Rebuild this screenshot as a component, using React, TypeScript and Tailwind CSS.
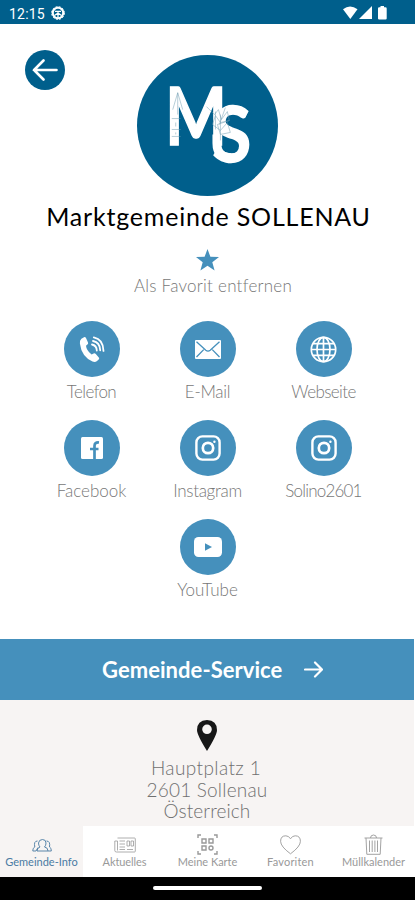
import type { ReactNode } from "react";
import { clsx } from "clsx";

interface Contact {
  label: string;
  tracking: string;
  icon: ReactNode;
}

interface NavEntry {
  label: string;
  tracking: string;
  icon: ReactNode;
}

function InstagramIcon() {
  return (
    <svg width="26" height="26" viewBox="0 0 26 26" fill="none" stroke="white">
      <rect x="1.4" y="1.4" width="23.2" height="23.2" rx="6" strokeWidth="2.4" />
      <circle cx="13" cy="13" r="5.2" strokeWidth="2.7" />
      <circle cx="19.4" cy="6.8" r="1.2" fill="white" stroke="none" />
    </svg>
  );
}

const CONTACTS: Contact[] = [
  {
    label: "Telefon",
    tracking: "tracking-[-0.6px]",
    icon: (
      <svg width="26" height="27" viewBox="0 0 26 27" fill="none">
        <path d="M2.4 2.7 5 1.2q1.3-.5 2 .8l2 4.4q.5 1.3-.6 2.1L7 9.7q.4 4.7 5.6 8.8l2-1q1.3-.5 2.2.5l3 3.4q.9 1.1-.1 2.2l-2 1.7q-1.8 1.2-4.2.2Q2.5 20.6.9 7.5.5 4.3 2.4 2.7Z" fill="white" />
        <path d="M13 8.5q4.600 1 4.800 6M14 5q7 1.200 7.200 9.300M14.800 1.400q9.500 2 9.700 13.500" stroke="white" strokeWidth="1.8" strokeLinecap="round" />
      </svg>
    ),
  },
  {
    label: "E-Mail",
    tracking: "tracking-[-0.3px]",
    icon: (
      <svg width="26" height="19" viewBox="0 0 26 19" fill="none">
        <rect width="26" height="19" rx="1" fill="white" />
        <path d="m1.5 1.8 9.3 8.400q2.200 1.800 4.400 0l9.300-8.400M1.500 17l7.200-7.400M24.500 17l-7.200-7.400" stroke="#4590bc" strokeWidth="1.3" />
      </svg>
    ),
  },
  {
    label: "Webseite",
    tracking: "tracking-[-0.6px]",
    icon: (
      <svg width="27" height="27" viewBox="0 0 27 27" fill="none" stroke="white" strokeWidth="1.7">
        <circle cx="13.5" cy="13.5" r="12.2" />
        <ellipse cx="13.5" cy="13.5" rx="6.5" ry="12.2" />
        <path d="M13.5 1.300v24.400M1.300 13.500h24.400M3 7.600h21M3 19.400h21" />
      </svg>
    ),
  },
  {
    label: "Facebook",
    tracking: "tracking-[0px]",
    icon: (
      <svg width="22" height="22" viewBox="0 0 22 22" fill="none">
        <rect width="22" height="22" rx="1.5" fill="white" />
        <path d="M13.500 22V9q0-4 4.500-3.500M9 12h8.500" stroke="#4590bc" strokeWidth="2.700" />
      </svg>
    ),
  },
  { label: "Instagram", tracking: "tracking-[-0.3px]", icon: <InstagramIcon /> },
  { label: "Solino2601", tracking: "tracking-[-0.8px]", icon: <InstagramIcon /> },
  {
    label: "YouTube",
    tracking: "tracking-[0px]",
    icon: (
      <svg width="28" height="20" viewBox="0 0 28 20">
        <rect width="28" height="20" rx="4.5" fill="white" />
        <path d="m11 6.300 7 3.700-7 3.700Z" fill="#4590bc" />
      </svg>
    ),
  },
];

const NAV: NavEntry[] = [
  {
    label: "Gemeinde-Info",
    tracking: "tracking-[0px]",
    icon: (
      <svg width="20" height="14" viewBox="0 0 20 14" fill="none" stroke="currentColor" strokeWidth="0.9">
        <path d="M5 13q0-3 3-4-1.500-1.500-1.500-4Q7 1.500 10.500 1.500T14 5q0 2.500-1.500 4 3.500.5 3.500 4ZM6 9.500 4 13H.8q-.3-3 2-4Q1.500 3 5.500 3M14.500 3q4 0 3 6 2 .8 1.800 4H16" />
      </svg>
    ),
  },
  {
    label: "Aktuelles",
    tracking: "tracking-[-0.1px]",
    icon: (
      <svg width="22" height="16" viewBox="0 0 22 16" fill="none" stroke="currentColor" strokeWidth="0.8">
        <path d="M3.500 1h17q.8 0 .8.800v12.400q0 .8-.8.800H2.500q-1.700 0-1.700-1.500V4h2.700v9.500M5.500 4H11M5.500 7H11M5.500 10H11M5.500 12.500H11M13 12.500h6M13 4h2.500v5H13ZM17 4h2.500v5H17Z" />
      </svg>
    ),
  },
  {
    label: "Meine Karte",
    tracking: "tracking-[0px]",
    icon: (
      <svg width="21" height="21" viewBox="0 0 21 21" fill="none" stroke="currentColor" strokeWidth="1.4">
        <path d="M1 4V1h3M17 1h3v3M20 17v3h-3M4 20H1v-3M5 5h4v4H5ZM12 5h4v4h-4ZM5 12h4v4H5Z" />
        <circle cx="14" cy="14" r="2" />
      </svg>
    ),
  },
  {
    label: "Favoriten",
    tracking: "tracking-[0.2px]",
    icon: (
      <svg width="21" height="20" viewBox="0 0 21 20" fill="none" stroke="currentColor" strokeWidth="0.9">
        <path d="M10.500 18.800Q.6 11.500.6 6.300.6.800 5.800.8q3 0 4.700 3Q12.200.8 15.200.8q5.200 0 5.200 5.500 0 5.200-9.900 12.500Z" />
      </svg>
    ),
  },
  {
    label: "Müllkalender",
    tracking: "tracking-[0px]",
    icon: (
      <svg width="19" height="21" viewBox="0 0 19 21" fill="none" stroke="currentColor" strokeWidth="0.9">
        <path d="M.5 4h18M6.500 4q0-3 3-3t3 3M2 4l.8 16.300h13.400L17 4M5.500 6.500v11.500M8.200 6.500v11.500M10.900 6.500v11.500M13.500 6.500v11.500" />
      </svg>
    ),
  },
];

function StatusBar() {
  return (
    <header className="h-6 shrink-0 bg-[#005f8c] pl-[9px] pr-[27px] flex items-center text-white">
      <span className="font-[Roboto] text-[14px] leading-6 tracking-[0.2px] pt-[3px]">12:15</span>
      <svg className="ml-[6px] mt-[2px]" width="14" height="14" viewBox="0 0 14 14" fill="none" stroke="white">
        <circle cx="7" cy="7" r="5.2" strokeWidth="2" />
        <circle cx="7" cy="7" r="6.4" strokeWidth="1" strokeDasharray="2 1.35" />
        <path d="M4 5.300h6M7 5.300V12M3.500 9.500 7 7l3.500 2.500" strokeWidth="1.3" />
      </svg>
      <svg className="ml-auto mt-px" width="45" height="14" viewBox="0 0 45 14" fill="white">
        <path d="M0 3.300Q7-2.300 14.500 3.300L7.300 13Z" />
        <path d="M29 0v13H16Z" />
        <path d="M37.500 0h3.500v1.300h1.500q1.200 0 1.200 1.200v10q0 1-1.200 1h-6.300q-1.200 0-1.200-1v-10q0-1.200 1.200-1.200h1.300Z" />
      </svg>
    </header>
  );
}

function Logo() {
  return (
    <svg className="mx-auto" width="141" height="141" viewBox="0 0 142 142">
      <circle cx="71" cy="71" r="71" fill="#005f8c" />
      <g fill="white" stroke="white" strokeWidth="1.5" fontFamily="Lato" fontWeight="700">
        <text x="28.5" y="91" fontSize="80" textLength="62" lengthAdjust="spacingAndGlyphs">M</text>
        <text x="76" y="108" fontSize="78" textLength="39" lengthAdjust="spacingAndGlyphs">S</text>
      </g>
      <path d="M80.500 80v9q0 14.500 14.500 14.500" stroke="white" strokeWidth="9" fill="none" />
      <g stroke="#6d9bb0" strokeWidth="0.5" fill="none">
        <path d="m41 38-5 17M41 38l5 17M41 38v22M35 64h9M35 75h9M35 82h9M39 68v4M39 78v2" />
        <path d="m70 52 8 8 4-5 3 10 6-8 2 9-9 2-5-7-3 9 8 6 7-8 3 10-10 2-3-10M79 57v18M84 60v26M89 53l-6 17M93 66l-12 4" />
      </g>
    </svg>
  );
}

function ContactItem({ label, tracking, icon }: Contact) {
  return (
    <div className="w-[116px] h-[99px] flex flex-col items-center">
      <div className="size-14 shrink-0 rounded-full bg-[#4590bc] flex items-center justify-center">{icon}</div>
      <span className={clsx("mt-1 text-[17px] leading-[22px] font-light text-[#777] whitespace-nowrap", tracking)}>{label}</span>
    </div>
  );
}

function BottomNav() {
  return (
    <nav className="h-[51px] shrink-0 flex bg-white">
      {NAV.map(({ label, tracking, icon }, i) => (
        <div
          key={label}
          className={clsx("w-[83px] flex flex-col items-center", i === 0 ? "bg-[#f7f4f3] text-[#4a7ba3]" : "text-[#999]")}
        >
          <div className="h-[21px] mt-2 flex items-center">{icon}</div>
          <span className={clsx("text-[11px] leading-[13px] whitespace-nowrap", tracking)}>{label}</span>
        </div>
      ))}
    </nav>
  );
}

export default function App() {
  return (
    <div className="w-[415px] h-[900px] overflow-hidden flex flex-col bg-white font-[Lato,sans-serif]">
      <StatusBar />

      <main className="h-[615px] shrink-0 relative pt-[31px] flex flex-col">
        <button className="absolute left-[25px] top-[26px] size-10 rounded-full bg-[#005f8c] flex items-center justify-center">
          <svg width="26" height="22" viewBox="0 0 26 22" fill="none" stroke="white" strokeWidth="2.6" strokeLinecap="round">
            <path d="M24.500 11H2M11.500 1.500 2 11l9.500 9.500" />
          </svg>
        </button>

        <Logo />
        <h1 className="mt-[3px] pl-[2px] text-center text-[25px] leading-[34px] text-black whitespace-nowrap tracking-[0.8px]">Marktgemeinde SOLLENAU</h1>

        <svg className="mx-auto mt-4" width="23" height="22" viewBox="0 0 23 22" fill="#4590bc">
          <path d="m11.500 0 2.900 7.800 8.600.3-6.700 5.200 2.300 8.300-7.100-4.800-7.100 4.800 2.300-8.300L0 8.100l8.600-.3Z" />
        </svg>
        <p className="mt-[3px] pl-[11px] text-center text-[17px] leading-6 font-light text-[#777] tracking-[0.25px]">Als Favorit entfernen</p>

        <div className="mt-[23px] mx-auto w-[348px] flex flex-wrap justify-center">
          {CONTACTS.map((contact) => (
            <ContactItem key={contact.label} {...contact} />
          ))}
        </div>
      </main>

      <button className="h-[61px] w-[414px] shrink-0 bg-[#4590bc] flex items-center pl-[102px] text-white">
        <span className="text-[22px] leading-7 font-bold tracking-[0.05px] whitespace-nowrap w-[202px] text-left">Gemeinde-Service</span>
        <svg width="19" height="17" viewBox="0 0 19 17" fill="none" stroke="white" strokeWidth="2.2" strokeLinecap="round">
          <path d="M1 8.500h17M11 1.500l7 7-7 7" />
        </svg>
      </button>

      <section className="h-[126px] w-[414px] shrink-0 bg-[#f7f4f3] pt-5 text-center">
        <svg className="mx-auto" width="20" height="31" viewBox="0 0 20 31">
          <path d="M10 0Q0 .6 0 10q0 5 10 21 10-16 10-21Q20 .6 10 0Zm0 4.500a4.800 4.800 0 1 1 0 9.600 4.800 4.800 0 0 1 0-9.600Z" fill="#171717" />
        </svg>
        <address className="mt-[6px] not-italic text-[19px] leading-[21.5px] font-light text-[#707070]">
          <div className="tracking-[0.4px] -translate-x-px">Hauptplatz 1</div>
          <div className="tracking-[0.2px]">2601 Sollenau</div>
          <div className="tracking-[0.1px]">Österreich</div>
        </address>
      </section>

      <BottomNav />

      <footer className="h-[23px] shrink-0 bg-black flex justify-center pt-[9px]">
        <div className="w-[109px] h-1 rounded-full bg-white" />
      </footer>
    </div>
  );
}
